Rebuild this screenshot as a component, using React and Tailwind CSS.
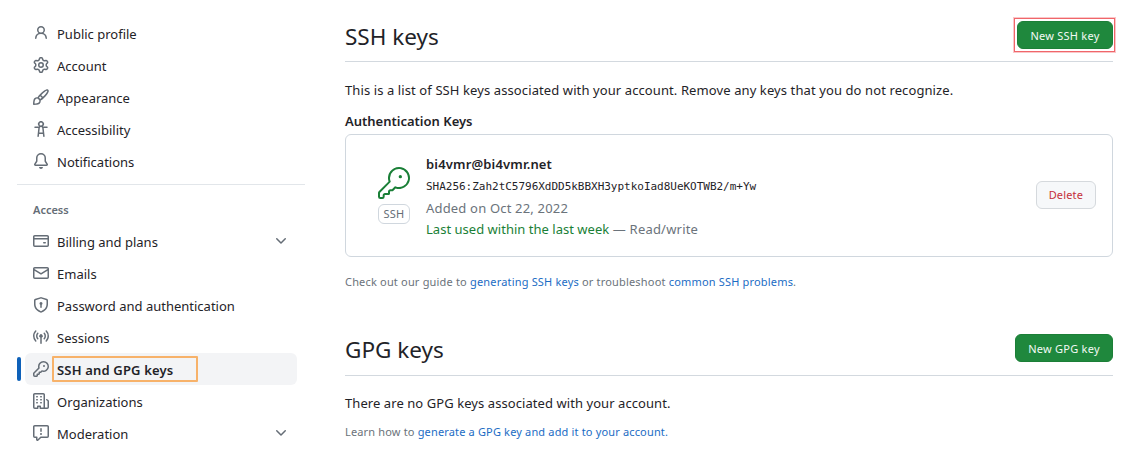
import React from "react";
import { GoKey } from "react-icons/go";

const paths = {
  person: "M10.561 8.073a6.005 6.005 0 0 1 3.432 5.142.75.75 0 1 1-1.498.07 4.5 4.5 0 0 0-8.99 0 .75.75 0 0 1-1.498-.07 6.004 6.004 0 0 1 3.431-5.142 3.999 3.999 0 1 1 5.123 0ZM10.5 5a2.5 2.5 0 1 0-5 0 2.5 2.5 0 0 0 5 0Z",
  gear: "M8 0a8.2 8.2 0 0 1 .701.031C9.444.095 9.99.645 10.16 1.29l.288 1.107c.018.066.079.158.212.224.231.114.454.243.668.386.123.082.233.09.299.071l1.103-.303c.644-.176 1.392.021 1.82.63.27.385.506.792.704 1.218.315.675.111 1.422-.364 1.891l-.814.806c-.049.048-.098.147-.088.294.016.257.016.515 0 .772-.01.147.038.246.088.294l.814.806c.475.469.679 1.216.364 1.891a7.977 7.977 0 0 1-.704 1.217c-.428.61-1.176.807-1.82.63l-1.102-.302c-.067-.019-.177-.011-.3.071a5.909 5.909 0 0 1-.668.386c-.133.066-.194.158-.211.224l-.29 1.106c-.168.646-.715 1.196-1.458 1.26a8.006 8.006 0 0 1-1.402 0c-.743-.064-1.289-.614-1.458-1.26l-.289-1.106c-.018-.066-.079-.158-.212-.224a5.738 5.738 0 0 1-.668-.386c-.123-.082-.233-.09-.299-.071l-1.103.303c-.644.176-1.392-.021-1.82-.63a8.12 8.12 0 0 1-.704-1.218c-.315-.675-.111-1.422.363-1.891l.815-.806c.05-.048.098-.147.088-.294a6.214 6.214 0 0 1 0-.772c.01-.147-.038-.246-.088-.294l-.815-.806C.635 6.045.431 5.298.746 4.623a7.92 7.92 0 0 1 .704-1.217c.428-.61 1.176-.807 1.82-.63l1.102.302c.067.019.177.011.3-.071.214-.143.437-.272.668-.386.133-.066.194-.158.211-.224l.29-1.106C6.009.645 6.556.095 7.299.03 7.53.01 7.764 0 8 0Zm-.571 1.525c-.036.003-.108.036-.137.146l-.289 1.105c-.147.561-.549.967-.998 1.189-.173.086-.34.183-.5.29-.417.278-.97.423-1.529.27l-1.103-.303c-.109-.03-.175.016-.195.045-.22.312-.412.644-.573.99-.014.031-.021.11.059.19l.815.806c.411.406.562.957.53 1.456a4.709 4.709 0 0 0 0 .582c.032.499-.119 1.05-.53 1.456l-.815.806c-.081.08-.073.159-.059.19.162.346.353.677.573.989.02.03.085.076.195.046l1.102-.303c.56-.153 1.113-.008 1.53.27.161.107.328.204.501.29.447.222.85.629.997 1.189l.289 1.105c.029.109.101.143.137.146a6.6 6.6 0 0 0 1.142 0c.036-.003.108-.036.137-.146l.289-1.105c.147-.561.549-.967.998-1.189.173-.086.34-.183.5-.29.417-.278.97-.423 1.529-.27l1.103.303c.109.029.175-.016.195-.045.22-.313.411-.644.573-.99.014-.031.021-.11-.059-.19l-.815-.806c-.411-.406-.562-.957-.53-1.456a4.709 4.709 0 0 0 0-.582c-.032-.499.119-1.05.53-1.456l.815-.806c.081-.08.073-.159.059-.19a6.464 6.464 0 0 0-.573-.989c-.02-.03-.085-.076-.195-.046l-1.102.303c-.56.153-1.113.008-1.53-.27a4.44 4.44 0 0 0-.501-.29c-.447-.222-.85-.629-.997-1.189l-.289-1.105c-.029-.11-.101-.143-.137-.146a6.6 6.6 0 0 0-1.142 0ZM11 8a3 3 0 1 1-6 0 3 3 0 0 1 6 0ZM9.5 8a1.5 1.5 0 1 0-3.001.001A1.5 1.5 0 0 0 9.5 8Z",
  paintbrush: "M11.134 1.535c.7-.509 1.416-.942 2.076-1.155.649-.21 1.463-.267 2.069.34.603.601.568 1.411.368 2.07-.202.668-.624 1.39-1.125 2.096-1.011 1.424-2.496 2.987-3.775 4.249-1.098 1.084-2.132 1.839-3.04 2.3a3.744 3.744 0 0 1-1.055 3.217c-.431.431-1.065.691-1.657.861-.614.177-1.294.287-1.914.357A21.151 21.151 0 0 1 .797 16H.743l.007-.75H.749L.742 16a.75.75 0 0 1-.743-.742l.743-.008-.742.007v-.054a21.25 21.25 0 0 1 .13-2.284c.067-.647.187-1.287.358-1.914.17-.591.43-1.226.86-1.657a3.746 3.746 0 0 1 3.227-1.054c.466-.893 1.225-1.907 2.314-2.982 1.271-1.255 2.833-2.75 4.245-3.777ZM1.62 13.089c-.051.464-.086.929-.104 1.395.466-.018.932-.053 1.396-.104a10.511 10.511 0 0 0 1.668-.309c.526-.151.856-.325 1.011-.48a2.25 2.25 0 1 0-3.182-3.182c-.155.155-.329.485-.48 1.01a10.515 10.515 0 0 0-.309 1.67Zm10.396-10.34c-1.224.89-2.605 2.189-3.822 3.384l1.718 1.718c1.21-1.205 2.51-2.597 3.387-3.833.47-.662.78-1.227.912-1.662.134-.444.032-.551.009-.575h-.001V1.78c-.014-.014-.113-.113-.548.027-.432.14-.995.462-1.655.942Zm-4.832 7.266-.001.001a9.859 9.859 0 0 0 1.63-1.142L7.155 7.216a9.7 9.7 0 0 0-1.161 1.607c.482.302.889.71 1.19 1.192Z",
  accessibility: "M9.923 5.302c.063.063.122.129.178.198H14A.75.75 0 0 1 14 7h-3.3l.578 5.163.362 2.997a.75.75 0 0 1-1.49.18L9.868 13H6.132l-.282 2.34a.75.75 0 0 1-1.49-.18l.362-2.997L5.3 7H2a.75.75 0 0 1 0-1.5h3.9a2.54 2.54 0 0 1 .176-.198 3 3 0 1 1 3.847 0ZM9.2 7.073h-.001a1.206 1.206 0 0 0-2.398 0L6.305 11.5h3.39ZM9.5 3a1.5 1.5 0 1 0-3.001.001A1.5 1.5 0 0 0 9.5 3Z",
  bell: "M8 16a2 2 0 0 0 1.985-1.75c.017-.137-.097-.25-.235-.25h-3.5c-.138 0-.252.113-.235.25A2 2 0 0 0 8 16ZM3 5a5 5 0 0 1 10 0v2.947c0 .05.015.098.042.139l1.703 2.555A1.519 1.519 0 0 1 13.482 13H2.518a1.516 1.516 0 0 1-1.263-2.36l1.703-2.554A.255.255 0 0 0 3 7.947Zm5-3.5A3.5 3.5 0 0 0 4.5 5v2.947c0 .346-.102.683-.294.97l-1.703 2.556a.017.017 0 0 0-.003.01l.001.006c0 .002.002.004.004.006l.006.004.007.001h10.964l.007-.001.006-.004.004-.006.001-.007a.017.017 0 0 0-.003-.01l-1.703-2.554a1.745 1.745 0 0 1-.294-.97V5A3.5 3.5 0 0 0 8 1.5Z",
  card: "M10.75 9a.75.75 0 0 0 0 1.5h1.5a.75.75 0 0 0 0-1.5h-1.5ZM0 3.75C0 2.784.784 2 1.75 2h12.5c.966 0 1.75.784 1.75 1.75v8.5A1.75 1.75 0 0 1 14.25 14H1.75A1.75 1.75 0 0 1 0 12.25ZM14.5 6.5h-13v5.75c0 .138.112.25.25.25h12.5a.25.25 0 0 0 .25-.25Zm0-2.75a.25.25 0 0 0-.25-.25H1.75a.25.25 0 0 0-.25.25V5h13Z",
  mail: "M1.75 2h12.5c.966 0 1.75.784 1.75 1.75v8.5A1.75 1.75 0 0 1 14.25 14H1.75A1.75 1.75 0 0 1 0 12.25v-8.5C0 2.784.784 2 1.75 2ZM1.5 12.251c0 .138.112.25.25.25h12.5a.25.25 0 0 0 .25-.25V5.809L8.38 9.397a.75.75 0 0 1-.76 0L1.5 5.809v6.442Zm13-8.181v-.32a.25.25 0 0 0-.25-.25H1.75a.25.25 0 0 0-.25.25v.32L8 7.88Z",
  shield: "m8.533.133 5.25 1.68A1.75 1.75 0 0 1 15 3.48V7c0 1.566-.32 3.182-1.303 4.682-.983 1.498-2.585 2.813-5.032 3.855a1.697 1.697 0 0 1-1.33 0c-2.447-1.042-4.049-2.357-5.032-3.855C1.32 10.182 1 8.566 1 7V3.48a1.75 1.75 0 0 1 1.217-1.667l5.25-1.68a1.748 1.748 0 0 1 1.066 0Zm-.61 1.429.001.001-5.25 1.68a.251.251 0 0 0-.174.237V7c0 1.36.275 2.666 1.057 3.859.784 1.194 2.121 2.342 4.366 3.298a.196.196 0 0 0 .154 0c2.245-.957 3.582-2.103 4.366-3.297C13.225 9.666 13.5 8.358 13.5 7V3.48a.25.25 0 0 0-.174-.238l-5.25-1.68a.25.25 0 0 0-.153 0ZM9.5 6.5c0 .536-.286 1.032-.75 1.3v2.45a.75.75 0 0 1-1.5 0V7.8A1.5 1.5 0 1 1 9.5 6.5Z",
  broadcast: "M8.75 8.582v5.668a.75.75 0 0 1-1.5 0V8.582a1.75 1.75 0 1 1 1.5 0Zm3.983-7.125a.75.75 0 0 1 1.06.026A7.976 7.976 0 0 1 16 7c0 2.139-.84 4.083-2.207 5.517a.75.75 0 1 1-1.086-1.034A6.474 6.474 0 0 0 14.5 7a6.474 6.474 0 0 0-1.793-4.483.75.75 0 0 1 .026-1.06Zm-9.466 0c.3.286.312.76.026 1.06A6.474 6.474 0 0 0 1.5 7a6.47 6.47 0 0 0 1.793 4.483.75.75 0 0 1-1.086 1.034A7.973 7.973 0 0 1 0 7c0-2.139.84-4.083 2.207-5.517a.75.75 0 0 1 1.06-.026Zm8.556 2.321A4.988 4.988 0 0 1 13 7a4.988 4.988 0 0 1-1.177 3.222.75.75 0 1 1-1.146-.967A3.487 3.487 0 0 0 11.5 7c0-.86-.309-1.645-.823-2.255a.75.75 0 0 1 1.146-.967Zm-6.492.958A3.48 3.48 0 0 0 4.5 7a3.48 3.48 0 0 0 .823 2.255.75.75 0 0 1-1.146.967A4.981 4.981 0 0 1 3 7a4.982 4.982 0 0 1 1.188-3.236.75.75 0 1 1 1.143.972Z",
  key: "M10.5 0a5.499 5.499 0 1 1-1.288 10.848l-.932.932a.749.749 0 0 1-.53.22H7v.75a.749.749 0 0 1-.22.53l-.5.5a.749.749 0 0 1-.53.22H5v.75a.749.749 0 0 1-.22.53l-.5.5a.749.749 0 0 1-.53.22h-2A1.75 1.75 0 0 1 0 14.25v-2c0-.199.079-.389.22-.53l4.932-4.932A5.5 5.5 0 0 1 10.5 0Zm-4 5.5c-.001.431.069.86.205 1.269a.75.75 0 0 1-.181.768L1.5 12.56v1.69c0 .138.112.25.25.25h1.69l.06-.06v-1.19a.75.75 0 0 1 .75-.75h1.19l.06-.06v-1.19a.75.75 0 0 1 .75-.75h1.19l1.023-1.025a.75.75 0 0 1 .768-.18A4 4 0 1 0 6.5 5.5ZM11 6a1 1 0 1 1 0-2 1 1 0 0 1 0 2Z",
  organization: "M1.75 16A1.75 1.75 0 0 1 0 14.25V1.75C0 .784.784 0 1.75 0h8.5C11.216 0 12 .784 12 1.75v12.5c0 .085-.006.168-.018.25h2.268a.25.25 0 0 0 .25-.25V8.285a.25.25 0 0 0-.111-.208l-1.055-.703a.749.749 0 1 1 .832-1.248l1.055.703c.487.325.779.871.779 1.456v5.965A1.75 1.75 0 0 1 14.25 16h-3.5a.766.766 0 0 1-.197-.026c-.099.017-.2.026-.303.026h-3a.75.75 0 0 1-.75-.75V14h-1v1.25a.75.75 0 0 1-.75.75Zm-.25-1.75c0 .138.112.25.25.25H4v-1.25a.75.75 0 0 1 .75-.75h2.5a.75.75 0 0 1 .75.75v1.25h2.25a.25.25 0 0 0 .25-.25V1.75a.25.25 0 0 0-.25-.25h-8.5a.25.25 0 0 0-.25.25ZM3.75 6h.5a.75.75 0 0 1 0 1.5h-.5a.75.75 0 0 1 0-1.5ZM3 3.75A.75.75 0 0 1 3.75 3h.5a.75.75 0 0 1 0 1.5h-.5A.75.75 0 0 1 3 3.75Zm4 3A.75.75 0 0 1 7.75 6h.5a.75.75 0 0 1 0 1.5h-.5A.75.75 0 0 1 7 6.75ZM7.75 3h.5a.75.75 0 0 1 0 1.5h-.5a.75.75 0 0 1 0-1.5ZM3 9.75A.75.75 0 0 1 3.75 9h.5a.75.75 0 0 1 0 1.5h-.5A.75.75 0 0 1 3 9.75ZM7.75 9h.5a.75.75 0 0 1 0 1.5h-.5a.75.75 0 0 1 0-1.5Z",
  report: "M0 1.75C0 .784.784 0 1.75 0h12.5C15.216 0 16 .784 16 1.75v9.5A1.75 1.75 0 0 1 14.25 13H8.06l-2.573 2.573A1.458 1.458 0 0 1 3 14.543V13H1.75A1.75 1.75 0 0 1 0 11.25Zm1.75-.25a.25.25 0 0 0-.25.25v9.5c0 .138.112.25.25.25h2a.75.75 0 0 1 .75.75v2.19l2.72-2.72a.749.749 0 0 1 .53-.22h6.5a.25.25 0 0 0 .25-.25v-9.5a.25.25 0 0 0-.25-.25Zm7 2.25v2.5a.75.75 0 0 1-1.5 0v-2.5a.75.75 0 0 1 1.5 0ZM9 9a1 1 0 1 1-2 0 1 1 0 0 1 2 0Z",
  chevron: "M12.78 5.22a.749.749 0 0 1 0 1.06l-4.25 4.25a.749.749 0 0 1-1.06 0L3.22 6.28a.749.749 0 1 1 1.06-1.06L8 8.939l3.72-3.719a.749.749 0 0 1 1.06 0Z",
};

const personal = [
  { label: "Public profile", icon: "person" },
  { label: "Account", icon: "gear" },
  { label: "Appearance", icon: "paintbrush" },
  { label: "Accessibility", icon: "accessibility" },
  { label: "Notifications", icon: "bell" },
];

const access = [
  { label: "Billing and plans", icon: "card", expandable: true },
  { label: "Emails", icon: "mail" },
  { label: "Password and authentication", icon: "shield" },
  { label: "Sessions", icon: "broadcast" },
  { label: "SSH and GPG keys", icon: "key", active: true },
  { label: "Organizations", icon: "organization" },
  { label: "Moderation", icon: "report", expandable: true },
];

function Icon({ name }) {
  return (
    <svg viewBox="0 0 16 16" fill="currentColor" className="size-4 shrink-0 text-[#656d76]">
      <path d={paths[name]} />
    </svg>
  );
}

function NavItem({ label, icon, active, expandable }) {
  return (
    <li className={`relative mx-2 flex h-8 items-center gap-2 rounded-md px-2 ${active ? "bg-[#f3f4f6]" : ""}`}>
      {active && <span className="absolute top-1 -left-2 h-6 w-1 rounded-md bg-[#0e61b9]" />}
      <Icon name={icon} />
      <span className={`relative grow pt-0.5 ${active ? "font-semibold tracking-[0.17px]" : ""}`}>
        {label}
        {active && <span className="absolute -top-[2px] -left-[5px] h-[26px] w-[146px] rounded-[1px] border-2 border-[#f7b26a]" />}
      </span>
      {expandable && <Icon name="chevron" />}
    </li>
  );
}

function SectionHeader({ title, action, highlighted }) {
  return (
    <div className={`flex items-start justify-between border-b border-[#d3d9df] ${highlighted ? "h-[41px]" : "h-[42px]"}`}>
      <h2 className="text-[22.5px] leading-8">{title}</h2>
      <button className={`relative h-7 rounded-md border border-[#1c7f37] bg-[#1f883d] text-center text-[11px] leading-none tracking-[0.25px] text-[#f4faf5] ${highlighted ? "w-24" : "w-[98px]"}`}>
        {action}
        {highlighted && <span className="absolute -top-1 -right-[3px] -bottom-1 -left-1 border border-[#f0666a] ring-1 ring-[#f0474b]/30" />}
      </button>
    </div>
  );
}

function Link({ children }) {
  return <a className="text-[#1b6cc4]">{children}</a>;
}

export default function App() {
  return (
    <div className="flex h-[450px] w-[1140px] overflow-hidden bg-white font-['Noto_Sans',sans-serif] text-[13px] leading-5 text-[#1f2328]">
      <nav className="ml-[17px] w-72 shrink-0 pt-[17px]">
        <ul>{personal.map((item) => <NavItem key={item.label} {...item} />)}</ul>
        <hr className="mt-[7px] border-[#e2e6ea]" />
        <h3 className="mt-4 mb-[6px] ml-4 text-[11px] leading-[18px] font-semibold text-[#656d76]">Access</h3>
        <ul>{access.map((item) => <NavItem key={item.label} {...item} />)}</ul>
      </nav>
      <main className="ml-10 w-[768px] pt-[21px]">
        <SectionHeader title="SSH keys" action="New SSH key" highlighted />
        <p className="mt-[18px] tracking-[0.1px]">This is a list of SSH keys associated with your account. Remove any keys that you do not recognize.</p>
        <h3 className="mt-[11px] font-semibold">Authentication Keys</h3>
        <div className="mt-[3px] flex h-[123px] items-center rounded-md border border-[#d0d7de] pr-4 pl-8">
          <div className="flex w-8 flex-col items-center">
            <GoKey className="size-8 text-[#1a7f37]" />
            <span className="mt-[5px] flex h-5 w-8 items-center justify-center rounded-md border border-[#d0d7de] text-[11px] tracking-[0.3px] text-[#656d76]">SSH</span>
          </div>
          <div className="ml-4 grow pt-[2px]">
            <p className="font-semibold leading-[22px] tracking-[0.16px]">bi4vmr@bi4vmr.net</p>
            <p className="pt-px font-['DejaVu_Sans_Mono',monospace] text-[11px] leading-[22px] tracking-[-0.02px]">SHA256:Zah2tC5796XdDD5kBBXH3yptkoIad8UeKOTWB2/m+Yw</p>
            <p className="leading-[21px] tracking-[0.18px] text-[#6b737b]">Added on Oct 22, 2022</p>
            <p className="leading-[21px] text-[#6b737b]"><span className="tracking-[0.02px] text-[#1a7f37]">Last used within the last week</span><span className="tracking-[0.2px]"> — Read/write</span></p>
          </div>
          <button className="-mt-0.5 h-7 rounded-md border border-[#d5d9dd] bg-[#f6f8fa] px-3 text-[11px] leading-none tracking-[0.15px] text-[#c5303c]">Delete</button>
        </div>
        <p className="mt-4 text-[11px] leading-[18px] tracking-[0.18px] text-[#6b737b]">Check out our guide to <Link>generating SSH keys</Link> or troubleshoot <Link>common SSH problems</Link>.</p>
        <div className="mt-[43px]"><SectionHeader title="GPG keys" action="New GPG key" /></div>
        <p className="mt-[17px] tracking-[0.07px]">There are no GPG keys associated with your account.</p>
        <p className="mt-[10px] text-[11px] leading-[18px] tracking-[0.16px] text-[#6b737b]">Learn how to <Link>generate a GPG key and add it to your account.</Link></p>
      </main>
    </div>
  );
}
